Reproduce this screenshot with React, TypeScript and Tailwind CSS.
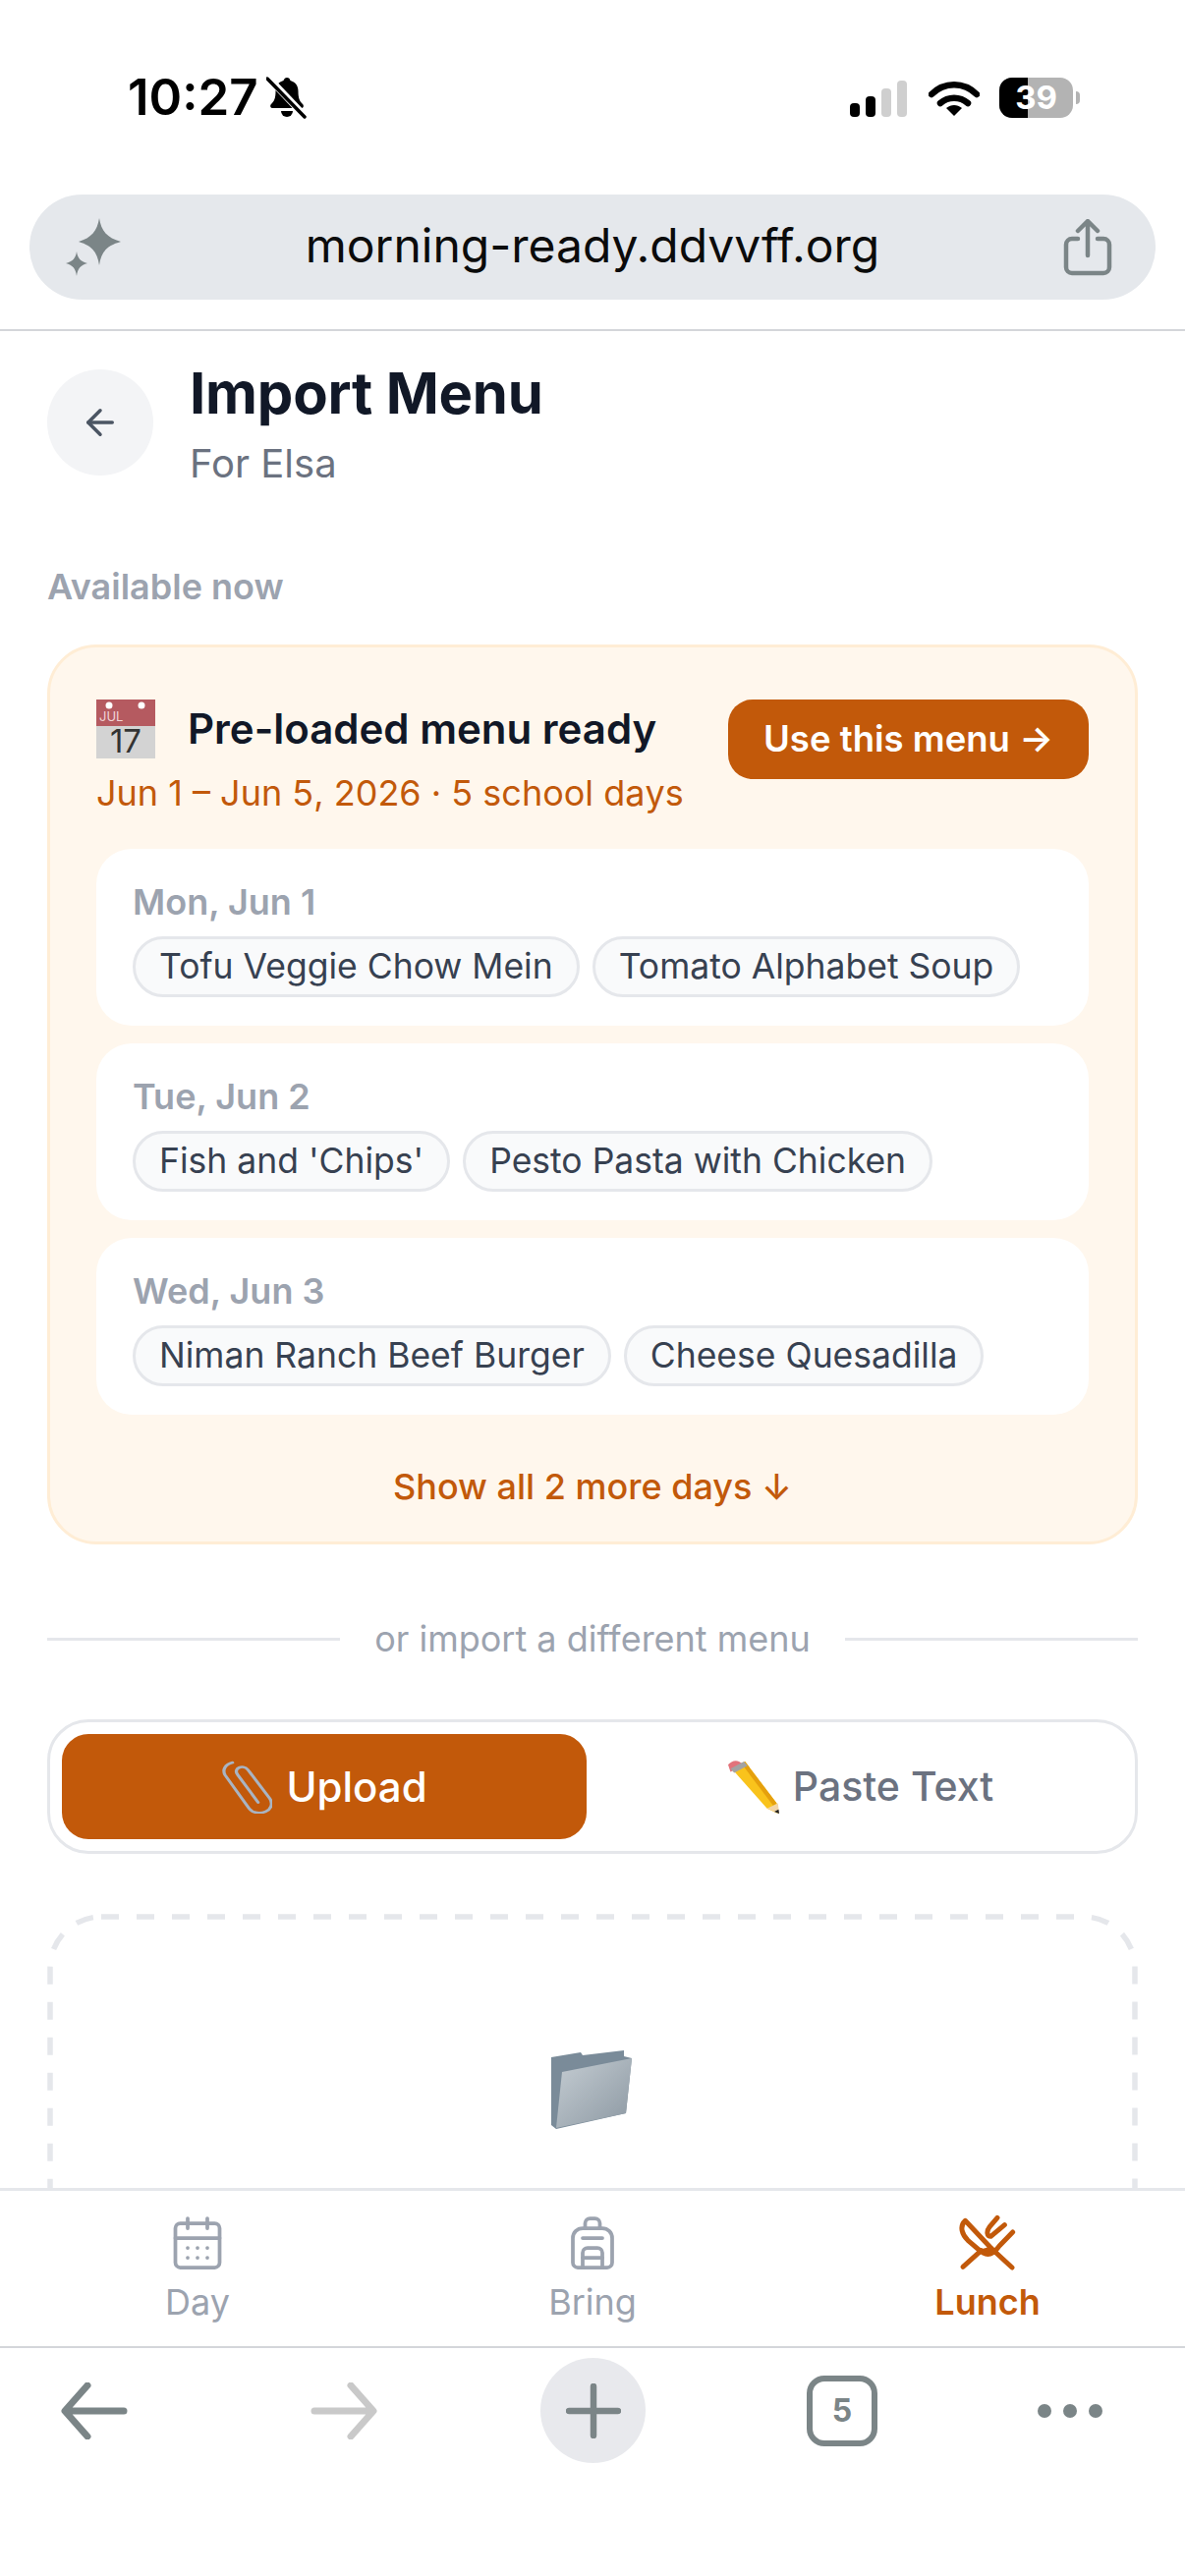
import { ArrowLeft, Backpack, CalendarDays } from "lucide-react";

const days = [
  { date: "Mon, Jun 1", meals: ["Tofu Veggie Chow Mein", "Tomato Alphabet Soup"] },
  { date: "Tue, Jun 2", meals: ["Fish and 'Chips'", "Pesto Pasta with Chicken"] },
  { date: "Wed, Jun 3", meals: ["Niman Ranch Beef Burger", "Cheese Quesadilla"] },
];

function StatusBar() {
  return (
    <div className="h-[198px] shrink-0 flex items-start justify-between pt-[70px] pl-[130px] pr-[107px]">
      <div className="flex items-center gap-[8px]">
        <span className="text-[51px] leading-[58px] font-semibold text-black">10:27</span>
        <svg width="42" height="44" viewBox="0 0 42 44">
          <path d="M21 2c-2 0-3 1.500-3.500 3-5 1.500-8 5-8 11 0 7-1.500 10-4.500 13-1.500 1.500-1 4 1.500 4h29c2.500 0 3-2.500 1.500-4-3-3-4.500-6-4.500-13 0-6-3-9.500-8-11C24 3 23 2 21 2z" fill="#000" />
          <path d="M15 36a6 6 0 0 0 12 0z" fill="#000" />
          <path d="M2 2l37 39" stroke="#fff" strokeWidth="7" />
          <path d="M1 3l38 39" stroke="#000" strokeWidth="3.500" strokeLinecap="round" />
        </svg>
      </div>
      <div className="flex items-center gap-[20px] mt-[9px]">
        <svg width="60" height="38" viewBox="0 0 60 38">
          <rect x="0" y="24" width="10" height="14" rx="4" fill="#000" />
          <rect x="16" y="17" width="10" height="21" rx="4" fill="#000" />
          <rect x="32" y="9" width="10" height="29" rx="4" fill="#cfcfcf" />
          <rect x="48" y="1" width="10" height="37" rx="4" fill="#cfcfcf" />
        </svg>
        <svg width="52" height="38" viewBox="0 0 52 38">
          <path d="M3 15C16 2 36 2 49 15" fill="none" stroke="#000" strokeWidth="6.500" strokeLinecap="round" />
          <path d="M12 24c8-7 20-7 28 0" fill="none" stroke="#000" strokeWidth="6.500" strokeLinecap="round" />
          <path d="M18 29c5-4 11-4 16 0l-8 8z" fill="#000" />
        </svg>
        <div className="flex items-center">
          <div className="relative w-[75px] h-[41px] rounded-[13px] overflow-hidden bg-[#b3b3b3] flex items-center justify-center">
            <div className="absolute left-0 top-0 bottom-0 w-[29px] bg-black" />
            <span className="relative text-[33px] leading-none font-bold text-white">39</span>
          </div>
          <div className="w-[4px] h-[13px] ml-[3px] rounded-r-full bg-[#b3b3b3]" />
        </div>
      </div>
    </div>
  );
}

function UrlBar() {
  return (
    <div className="h-[139px] shrink-0 px-[30px] border-b-2 border-[#d4d6da]">
      <div className="h-[107px] rounded-full bg-[#e5e8ec] flex items-center justify-between pl-[36px] pr-[44px]">
        <svg width="58" height="60" viewBox="0 0 58 60">
          <path d="M35 0c2 13 8 20 22 24-14 4-20 10-22 24-2-14-8-20-21-24 13-4 19-11 21-24z" fill="#7b8587" />
          <path d="M12 34c1 7 4 10 11 12-7 2-10 5-11 13-1-8-4-11-11-13 7-2 10-5 11-12z" fill="#7b8587" />
        </svg>
        <span className="text-[48px] leading-none font-normal text-[#0b0b0b] pb-[4px]">morning-ready.ddvvff.org</span>
        <svg width="50" height="58" viewBox="0 0 50 58" fill="none" stroke="#7b8587" strokeWidth="4.500" strokeLinecap="round" strokeLinejoin="round">
          <path d="M15 20H9a6 6 0 0 0-6 6v23a6 6 0 0 0 6 6h32a6 6 0 0 0 6-6V26a6 6 0 0 0-6-6h-6" />
          <path d="M25 37V3M15 12l10-10 10 10" />
        </svg>
      </div>
    </div>
  );
}

function ChipRow({ date, meals }: { date: string; meals: string[] }) {
  return (
    <div className="h-[180px] rounded-[36px] bg-white px-[37px] pt-[32px]">
      <div className="text-[36px] leading-[44px] font-semibold text-[#9ca3af]">{date}</div>
      <div className="flex gap-[13px] mt-[13px]">
        {meals.map((meal) => (
          <span key={meal} className="h-[62px] rounded-full border-[3px] border-[#e5e7eb] bg-[#f9fafb] px-[24px] flex items-center whitespace-nowrap text-[35.500px] text-[#374151]">
            {meal}
          </span>
        ))}
      </div>
    </div>
  );
}

function CalendarEmoji() {
  return (
    <svg className="overflow-visible" width="60" height="60" viewBox="0 0 60 60">
      <rect width="60" height="27" fill="#b55a60" />
      <rect y="27" width="60" height="33" fill="#d3d3d3" />
      <circle cx="13" cy="6" r="3.500" fill="#fff" />
      <circle cx="46" cy="6" r="3.500" fill="#fff" />
      <text x="3" y="22" fontSize="13" fill="#f1d4d6" fontFamily="Inter, sans-serif">JUL</text>
      <text x="30" y="54" fontSize="33" textAnchor="middle" fill="#333" fontFamily="Inter, sans-serif">17</text>
    </svg>
  );
}

function Clip() {
  return (
    <svg width="52" height="54" viewBox="4 1 40 52" preserveAspectRatio="none" fill="none" stroke="#a9b4c2" strokeWidth="2.500" strokeLinecap="round">
      <path d="M13 3c-6 2-8 7-6 12l19 33c3 5 9 5 13 3s6-8 3-13L25 10c-2-3-5-3-7-2s-3 4-1 7l16 27" />
    </svg>
  );
}

function Pencil() {
  return (
    <svg width="52" height="54" viewBox="3 1 42 52" preserveAspectRatio="none">
      <path d="M6 9l11-7 26 41 1 10-9-5z" fill="#f9c31c" />
      <path d="M14 4l3-2 26 41-3 2z" fill="#e5a00d" />
      <path d="M3 5c2-3 6-5 9-3l4 3-11 7z" fill="#e2737b" />
      <path d="M5 9l11-7 3 4-11 7z" fill="#a3a3a3" />
      <path d="M35 48l9-5 1 10z" fill="#f2d5a8" />
      <path d="M41 51l3.500-2 .500 4z" fill="#222" />
    </svg>
  );
}

function Folder() {
  return (
    <svg width="84" height="80" viewBox="0 0 84 80">
      <defs>
        <linearGradient id="folderFront" x1="0" y1="0" x2="1" y2="1">
          <stop offset="0" stopColor="#c5cdd3" />
          <stop offset="1" stopColor="#8c98a2" />
        </linearGradient>
      </defs>
      <path d="M0 7l30-5 2 3 42-5v6l8 2-6 56L5 80 0 76z" fill="#7a8b99" />
      <path d="M11 22l71-14-6 56L5 79z" fill="url(#folderFront)" />
    </svg>
  );
}

function UtensilsIcon() {
  return (
    <svg width="60" height="60" viewBox="225 130 180 180" fill="none" stroke="#c2590a" strokeWidth="15" strokeLinecap="round" strokeLinejoin="round">
      <path d="M247 152C228 170 238 195 255 212L296 247L328 238Z" />
      <path d="M328 238L390 295" />
      <path d="M240 293L296 243" />
      <path d="M345 143L322 170C310 186 314 200 325 200L367 165" />
      <path d="M392 187L352 228C340 245 322 262 302 250" />
    </svg>
  );
}

export default function App() {
  return (
    <div className="w-[1206px] h-[2622px] bg-white flex flex-col overflow-hidden font-['Inter',sans-serif]">
      <StatusBar />
      <UrlBar />

      <main className="flex-1 min-h-0 overflow-hidden px-[48px]">
        <div className="flex gap-[37px] pt-[33px]">
          <button className="w-[108px] h-[108px] mt-[6px] rounded-full bg-[#f3f4f6] flex items-center justify-center">
            <ArrowLeft size={42} color="#4b5563" strokeWidth={2} />
          </button>
          <div>
            <h1 className="text-[58px] leading-[60px] font-bold text-[#111827] tracking-[-0.2px]">Import Menu</h1>
            <p className="text-[40px] leading-[48px] mt-[18px] text-[#6b7280]">For Elsa</p>
          </div>
        </div>

        <div className="mt-[79px] text-[36px] leading-[44px] font-semibold text-[#9ca3af]">Available now</div>

        <section className="mt-[37px] h-[916px] rounded-[50px] border-[3px] border-[#ffedd5] bg-[#fff7ed] px-[47px] pt-[53px]">
          <div className="flex justify-between">
            <div>
              <div className="flex items-center gap-[33px]">
                <CalendarEmoji />
                <span className="text-[42px] leading-[50px] font-semibold text-[#111827]">Pre-loaded menu ready</span>
              </div>
              <div className="mt-[13px] text-[36px] leading-[44px] text-[#c2590a] [font-kerning:none]">Jun 1 – Jun 5, 2026 · 5 school days</div>
            </div>
            <button className="w-[367px] h-[81px] rounded-[25px] bg-[#c2590a] text-[36.500px] font-semibold text-white">Use this menu →</button>
          </div>
          <div className="mt-[35px] flex flex-col gap-[18px]">
            {days.map((day) => (
              <ChipRow key={day.date} date={day.date} meals={day.meals} />
            ))}
          </div>
          <div className="mt-[50px] text-center text-[36px] leading-[46px] font-medium text-[#c2590a]">Show all 2 more days ↓</div>
        </section>

        <div className="mt-[73px] flex items-center gap-[35px]">
          <div className="h-[3px] flex-1 bg-[#e5e7eb]" />
          <span className="text-[36px] leading-[46px] text-[#9ca3af]">or import a different menu</span>
          <div className="h-[3px] flex-1 bg-[#e5e7eb]" />
        </div>

        <div className="mt-[59px] h-[137px] rounded-[42px] border-[3px] border-[#e5e7eb] p-[12px] grid grid-cols-2 gap-[12px]">
          <button className="rounded-[27px] bg-[#c2590a] flex items-center justify-center gap-[14px] text-[42px] font-medium text-white">
            <Clip /> Upload
          </button>
          <button className="rounded-[27px] flex items-center justify-center gap-[14px] text-[41px] font-medium text-[#6b7280]">
            <Pencil /> Paste Text
          </button>
        </div>

        <div className="relative mt-[61px] h-[400px] pt-[139px] flex justify-center">
          <svg className="absolute inset-0" width="1110" height="400" fill="none" stroke="#e5e7eb" strokeWidth="5.500" strokeDasharray="18 18">
            <rect x="3" y="3" width="1104" height="394" rx="52" />
          </svg>
          <Folder />
        </div>
      </main>

      <nav className="h-[161px] shrink-0 bg-white border-t-[3px] border-[#e5e7eb] grid grid-cols-3">
        <div className="flex flex-col items-center pt-[23px] text-[#9ca3af]">
          <CalendarDays size={60} strokeWidth={1.500} />
          <span className="text-[36px] leading-[44px] mt-[8px]">Day</span>
        </div>
        <div className="flex flex-col items-center pt-[23px] text-[#9ca3af]">
          <Backpack size={60} strokeWidth={1.500} />
          <span className="text-[36px] leading-[44px] mt-[8px]">Bring</span>
        </div>
        <div className="flex flex-col items-center pt-[23px] text-[#c2590a]">
          <UtensilsIcon />
          <span className="text-[36px] leading-[44px] mt-[8px] font-semibold">Lunch</span>
        </div>
      </nav>

      <div className="h-[234px] shrink-0 border-t-2 border-[#d4d6da] flex items-start pl-[62px] pt-[10px]">
        <div className="h-[107px] flex items-center">
          <svg width="68" height="58" viewBox="0 0 68 58" fill="none" stroke="#7b8587" strokeWidth="7" strokeLinecap="round" strokeLinejoin="round">
            <path d="M64 29H5M27 3L4 29l23 26" />
          </svg>
        </div>
        <div className="h-[107px] ml-[186px] flex items-center">
          <svg width="68" height="58" viewBox="0 0 68 58" fill="none" stroke="#c9c9c9" strokeWidth="7" strokeLinecap="round" strokeLinejoin="round">
            <path d="M4 29h59M41 3l23 26-23 26" />
          </svg>
        </div>
        <div className="w-[107px] h-[107px] ml-[166px] rounded-full bg-[#e8e9ed] flex items-center justify-center">
          <svg width="56" height="56" viewBox="0 0 56 56" fill="none" stroke="#7b8587" strokeWidth="6.500" strokeLinecap="round">
            <path d="M28 3v50M3 28h50" />
          </svg>
        </div>
        <div className="h-[107px] ml-[164px] flex items-center">
          <div className="w-[72px] h-[72px] rounded-[18px] border-[6px] border-[#7b8587] flex items-center justify-center text-[32px] font-bold text-[#7b8587]">5</div>
        </div>
        <div className="h-[107px] ml-[163px] flex items-center gap-[12px]">
          <div className="w-[14px] h-[14px] rounded-full bg-[#7b8587]" />
          <div className="w-[14px] h-[14px] rounded-full bg-[#7b8587]" />
          <div className="w-[14px] h-[14px] rounded-full bg-[#7b8587]" />
        </div>
      </div>
    </div>
  );
}
